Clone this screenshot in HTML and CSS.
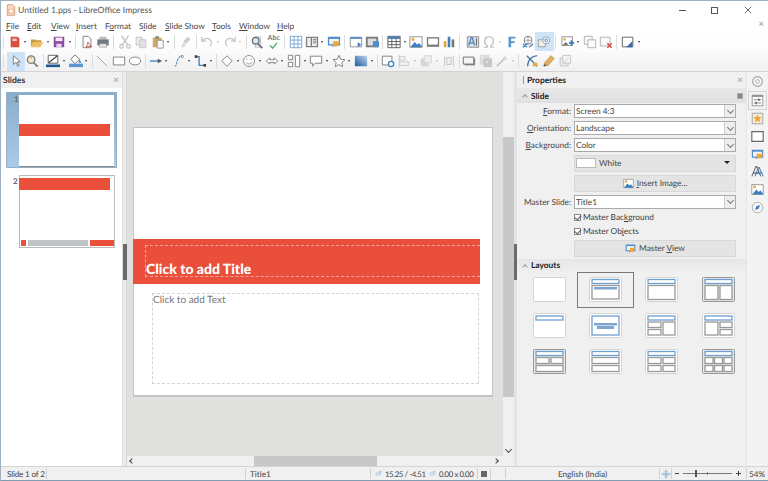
FILE: index.html
```html
<!DOCTYPE html>
<html lang="en">
<head>
<meta charset="utf-8">
<title>Untitled 1.pps - LibreOffice Impress</title>
<link rel="stylesheet" href="styles.css">
</head>
<body>
<svg class="defs" aria-hidden="true">
<symbol id="new" viewBox="0 0 16 16"><path d="M3 2h8l2 2v10H3z" fill="#d8503f"/><path d="M5 4h5v3H5z" fill="#f4c9c2"/></symbol>
<symbol id="open" viewBox="0 0 16 16"><path d="M1 5h5l1 1h6v2H4l-3 6z" fill="#c99a45"/><path d="M4 8h11l-3 6H1z" fill="#f0bd62"/></symbol>
<symbol id="save" viewBox="0 0 16 16"><path d="M2 2h12v12H2z" fill="#8d4aa5"/><path d="M4 3h8v4H4z" fill="#f3eaf6"/><path d="M5 10h6v4H5z" fill="#e7d7ec"/></symbol>
<symbol id="pdf" viewBox="0 0 16 16"><path d="M3.5 1.5h6l3 3v10h-9z" fill="#fff" stroke="#777"/><path d="M9 8c1 2 2 4 4 5-2 0-4 0-6 1 1-2 2-4 2-6z" fill="none" stroke="#d0443a"/></symbol>
<symbol id="print" viewBox="0 0 16 16"><path d="M4 2h8v3H4z" fill="#bbb"/><path d="M1.5 5h13v7h-13z" fill="#6f7b83"/><path d="M4 10h8v4H4z" fill="#e8e8e8" stroke="#888" stroke-width=".6"/></symbol>
<symbol id="cut" viewBox="0 0 16 16"><g fill="none" stroke="#bdbdbd" stroke-width="1.3"><path d="M4 1l7 10M12 1L5 11"/><circle cx="4" cy="13" r="2"/><circle cx="12" cy="13" r="2"/></g></symbol>
<symbol id="copy" viewBox="0 0 16 16"><path d="M2.5 2.5h7v9h-7z" fill="#eee" stroke="#c0c0c0"/><path d="M6.5 5.5h7v9h-7z" fill="#e2e2e2" stroke="#c0c0c0"/></symbol>
<symbol id="paste" viewBox="0 0 16 16"><path d="M2 3h10v11H2z" fill="#d0a868"/><path d="M5 1.500h4V4H5z" fill="#777"/><path d="M7 6h7v9H7z" fill="#fafafa" stroke="#777" stroke-width=".8"/></symbol>
<symbol id="clone" viewBox="0 0 16 16"><path d="M10 2l3 3-5 5-3-3z" fill="#ccc"/><path d="M5 8l3 3-2 3-4 0z" fill="#ddd"/></symbol>
<symbol id="undo" viewBox="0 0 16 16"><path d="M3 6c4-4 10-2 10 3 0 2-1 3-2 4M2 2v5h5" fill="none" stroke="#c4c4c4" stroke-width="1.3"/></symbol>
<symbol id="redo" viewBox="0 0 16 16"><path d="M13 6C9 2 3 4 3 9c0 2 1 3 2 4M14 2v5H9" fill="none" stroke="#c4c4c4" stroke-width="1.3"/></symbol>
<symbol id="find" viewBox="0 0 16 16"><path d="M6 2h6v12H6z" fill="#eee" stroke="#aaa" stroke-width=".7"/><circle cx="6.500" cy="6.500" r="3.800" fill="#d9e7f3" stroke="#5f6d78" stroke-width="1.400"/><path d="M9 10l5 5" stroke="#5f6d78" stroke-width="2"/></symbol>
<symbol id="grid" viewBox="0 0 16 16"><path d="M1.500 1.500h13v13h-13zM5.800 1.500v13M10.200 1.500v13M1.500 5.800h13M1.500 10.200h13" fill="#fff" stroke="#6f9fd0"/></symbol>
<symbol id="view" viewBox="0 0 16 16"><path d="M1 2h14v12H1z" fill="#7f7f7f"/><path d="M2.500 3.500h4v9h-4zM8 3.500h5.500v9H8z" fill="#efefef"/><path d="M9 5h4M9 7h4M9 9h4" stroke="#777"/></symbol>
<symbol id="master" viewBox="0 0 16 16"><path d="M1 2h14v10H8l-2 2v-2H1z" fill="#4f8cc9"/><path d="M2.500 4.500h11v6h-11z" fill="#f4f4f4"/><path d="M7 7h8l-3 6H7z" fill="#eea73c"/></symbol>
<symbol id="slide" viewBox="0 0 16 16"><path d="M1.500 2.500h13v11h-13z" fill="#fff" stroke="#888"/><path d="M1.500 2.500h13v2h-13z" fill="#4f8cc9"/><path d="M10 8l4 3-4 3z" fill="#3d7fc0"/></symbol>
<symbol id="slide2" viewBox="0 0 16 16"><path d="M1 2h14v12H1z" fill="#777"/><path d="M3 4h10v8H3z" fill="#ddd"/><path d="M9 7h7v7H9z" fill="#4f8cc9"/></symbol>
<symbol id="table" viewBox="0 0 16 16"><path d="M1 1.500h14v13H1z" fill="#fff" stroke="#555"/><path d="M1 1.500h14v3H1z" fill="#4f7fb0"/><path d="M1 7.500h14M1 11h14M5.500 4.500v10M10.500 4.500v10" stroke="#555"/></symbol>
<symbol id="image" viewBox="0 0 16 16"><path d="M1 2h14v12H1z" fill="#fff" stroke="#888"/><path d="M1.500 14l5-6 3 3 2-2 4 5z" fill="#3d7fc0"/><circle cx="4.500" cy="5" r="1.800" fill="#eeb03c"/></symbol>
<symbol id="video" viewBox="0 0 16 16"><path d="M1 2.500h14v11H1z" fill="#777"/><path d="M2.500 4h11v7h-11z" fill="#fff"/></symbol>
<symbol id="chart" viewBox="0 0 16 16"><path d="M2 7h3v7H2z" fill="#e3a63b"/><path d="M6.500 2h3v12h-3z" fill="#3d7fc0"/><path d="M11 5h3v9h-3z" fill="#777"/></symbol>
<symbol id="textbox" viewBox="0 0 16 16"><path d="M1.500 2h13v12h-13z" fill="#ddd" stroke="#888"/><path d="M3 12l3-9h1l3 9M4.300 9h4.500" fill="none" stroke="#3d7fc0" stroke-width="1.300"/><path d="M12 4v8" stroke="#555"/></symbol>
<symbol id="omega" viewBox="0 0 16 16"><path d="M2 14h4v-2c-2-1-3-3-3-5 0-3 2-5 5-5s5 2 5 5c0 2-1 4-3 5v2h4" fill="none" stroke="#bdbdbd" stroke-width="1.400"/></symbol>
<symbol id="fontwork" viewBox="0 0 16 16"><path d="M4 2h8v2H7v3h4v2H7v5H4z" fill="#5a96cf"/></symbol>
<symbol id="link" viewBox="0 0 16 16"><circle cx="8" cy="6" r="4.500" fill="none" stroke="#777"/><path d="M3.500 6h9M8 1.500v9" stroke="#777" stroke-width=".7"/><path d="M2 10l5 4M14 10l-5 4M2 14l5-4" stroke="#3d7fc0" stroke-width="1.300" fill="none"/></symbol>
<symbol id="inter" viewBox="0 0 16 16"><path d="M1.500 5.500h8v8h-8z" fill="#eee" stroke="#999"/><circle cx="10.500" cy="6" r="4" fill="#f4f8fc" stroke="#999"/><circle cx="10.500" cy="6" r="1.500" fill="#fff" stroke="#3d7fc0"/></symbol>
<symbol id="imgadd" viewBox="0 0 16 16"><path d="M1 2h12v10H1z" fill="#fff" stroke="#888"/><circle cx="4" cy="5" r="1.500" fill="#eeb03c"/><path d="M1.500 12l4-4 3 3z" fill="#777"/><path d="M9 9h6M12 6v6" stroke="#3d7fc0" stroke-width="2"/></symbol>
<symbol id="dup" viewBox="0 0 16 16"><path d="M1.500 1.500h9v9h-9z" fill="#fafafa" stroke="#aaa"/><path d="M5.500 5.500h9v9h-9z" fill="#fafafa" stroke="#aaa"/></symbol>
<symbol id="delslide" viewBox="0 0 16 16"><path d="M1.500 2.500h11v10h-11z" fill="#fafafa" stroke="#aaa"/><path d="M9.500 9.500l5 5M14.500 9.500l-5 5" stroke="#d9453b" stroke-width="1.500"/></symbol>
<symbol id="fill" viewBox="0 0 16 16"><path d="M1.500 2.500h12v11h-12z" fill="#fff" stroke="#555"/><path d="M13 7v7H6z" fill="#2f6cab"/></symbol>
<symbol id="select" viewBox="0 0 16 16"><path d="M5 2v10l3-2.500 2 4.500 1.500-.7-2-4.300h3.500z" fill="#fff" stroke="#666" stroke-width=".9"/></symbol>
<symbol id="zoomi" viewBox="0 0 16 16"><circle cx="7" cy="6.500" r="4.300" fill="#f7e7c9" stroke="#6f7b83" stroke-width="1.500"/><path d="M10 10l4.500 4.500" stroke="#6f7b83" stroke-width="2"/><path d="M5 4.500h3" stroke="#e0a030"/></symbol>
<symbol id="linec" viewBox="0 0 16 16"><path d="M2.500 1.500h11v9h-11z" fill="#fff" stroke="#555"/><path d="M3 10L13 2" stroke="#444" stroke-width="1.300"/><path d="M0 12h16v3H0z" fill="#23568f"/></symbol>
<symbol id="fillc" viewBox="0 0 16 16"><path d="M7 1l5 5-5 5-5-5z" fill="#fff" stroke="#666"/><path d="M12 6l2 4h-3z" fill="#3d7fc0"/><path d="M0 11h16v4H0z" fill="#5a96cf"/></symbol>
<symbol id="line" viewBox="0 0 16 16"><path d="M2 2l12 12" stroke="#8f8f8f" stroke-width=".9"/></symbol>
<symbol id="rect" viewBox="0 0 16 16"><path d="M1.500 3.500h13v9h-13z" fill="#fff" stroke="#777"/></symbol>
<symbol id="ell" viewBox="0 0 16 16"><ellipse cx="8" cy="8" rx="6.500" ry="4.500" fill="#fff" stroke="#777"/></symbol>
<symbol id="arrow" viewBox="0 0 16 16"><path d="M1 8h10" stroke="#3d7fc0" stroke-width="1.500"/><path d="M10 5.500l5 2.500-5 2.500z" fill="#555"/></symbol>
<symbol id="curve" viewBox="0 0 16 16"><path d="M4 14c3 0 2-5 4-8s2-4 5-4" fill="none" stroke="#4f8cc9" stroke-width="1.200" stroke-dasharray="3 .6"/><circle cx="13" cy="3" r="1.200" fill="#fff" stroke="#555" stroke-width=".7"/></symbol>
<symbol id="conn" viewBox="0 0 16 16"><path d="M3 3h4v10h6" fill="none" stroke="#3d7fc0" stroke-width="1.500"/><path d="M2 1.500h3v3H2zM12 11.500h3v3h-3z" fill="#444"/></symbol>
<symbol id="diam" viewBox="0 0 16 16"><path d="M8 2l6 6-6 6-6-6z" fill="#fff" stroke="#777"/></symbol>
<symbol id="smile" viewBox="0 0 16 16"><circle cx="8" cy="8" r="6.300" fill="#fff" stroke="#888"/><path d="M5 6h1M10 6h1" stroke="#666" stroke-width="1.300"/><path d="M4.500 9.500c1.500 2.500 5.500 2.500 7 0" fill="none" stroke="#888"/></symbol>
<symbol id="dbl" viewBox="0 0 16 16"><path d="M1.500 8l4-3.500v2h5v-2l4 3.500-4 3.500v-2h-5v2z" fill="#fff" stroke="#777"/></symbol>
<symbol id="flow" viewBox="0 0 16 16"><path d="M1.500 1.500h5v5h-5zM9.500 1.500h5v13h-5zM1.500 9.500h5v5h-5z" fill="#fff" stroke="#777"/></symbol>
<symbol id="call" viewBox="0 0 16 16"><path d="M1.500 2.500h13v8H7l-3 3.500v-3.500H1.500z" fill="#fff" stroke="#777"/></symbol>
<symbol id="star" viewBox="0 0 16 16"><path d="M8 1.500l2 4.500 4.800.500-3.600 3.200 1 4.800L8 12.100l-4.200 2.400 1-4.800L1.200 6.500 6 6z" fill="#fff" stroke="#777"/></symbol>
<symbol id="shad" viewBox="0 0 16 16"><defs><linearGradient id="g1" x1="0" y1="1" x2="1" y2="0"><stop offset="0" stop-color="#1e5c9e"/><stop offset="1" stop-color="#bcd3ea"/></linearGradient></defs><path d="M1 2h14v12H1z" fill="url(#g1)"/></symbol>
<symbol id="pts" viewBox="0 0 16 16"><path d="M1.500 2.500h11v10h-11z" fill="#fff" stroke="#777"/><circle cx="11.500" cy="11.500" r="3" fill="#fff" stroke="#3d7fc0" stroke-width="1.500"/></symbol>
<symbol id="align" viewBox="0 0 16 16"><path d="M2.500 1v14" stroke="#c8c8c8"/><path d="M3 3h6v4H3zM3 9h10v4H3z" fill="#f5f5f5" stroke="#c8c8c8"/></symbol>
<symbol id="arr" viewBox="0 0 16 16"><path d="M2 5h9v9H2z" fill="#d8d8d8"/><path d="M6 2h8v8H6z" fill="#ededed" stroke="#d0d0d0"/></symbol>
<symbol id="dist" viewBox="0 0 16 16"><path d="M3 2v12M13 2v12" stroke="#c0c0c0"/><path d="M5.500 4h5v8h-5z" fill="#eee" stroke="#c0c0c0"/></symbol>
<symbol id="shadow2" viewBox="0 0 16 16"><path d="M3 5h12v8H3z" fill="#888"/><path d="M1.500 3.500h12v8h-12z" fill="#f4f4f4" stroke="#666"/></symbol>
<symbol id="crop" viewBox="0 0 16 16"><path d="M1 1h11v11H1z" fill="#ddd"/><path d="M5 5h10v10H5z" fill="#c8c8c8"/><path d="M3 3h2v2H3zM8 8h2v2H8z" fill="#eee"/></symbol>
<symbol id="filter" viewBox="0 0 16 16"><path d="M2 14L11 5" stroke="#c4c4c4" stroke-width="2"/><path d="M11 2l3 3-2 2-3-3z" fill="#d8d8d8"/></symbol>
<symbol id="bez" viewBox="0 0 16 16"><path d="M2 2l12 12M14 2C8 2 3 7 3 14" fill="none" stroke="#3f6fa0" stroke-width="1.400"/><path d="M9 10h5v4H9z" fill="#e5a63a"/></symbol>
<symbol id="pencil" viewBox="0 0 16 16"><path d="M2 14l1-4 7-8 4 3-7 8z" fill="#e2b062" stroke="#a98040" stroke-width=".7"/><path d="M2 14l1-3 2 2z" fill="#555"/></symbol>
<symbol id="fx" viewBox="0 0 16 16"><path d="M2.500 4.500h9v9h-9z" fill="#eee" stroke="#c0c0c0"/><path d="M5.500 1.500h9v9h-9z" fill="#f4f4f4" stroke="#c0c0c0"/><path d="M5 12L12 4" stroke="#c8c8c8"/></symbol>
<symbol id="gear" viewBox="0 0 16 16"><circle cx="8" cy="8" r="6" fill="#f7f7f7" stroke="#a0a0a0" stroke-width="1.300"/><circle cx="8" cy="8" r="2.300" fill="none" stroke="#a0a0a0"/></symbol>
<symbol id="props" viewBox="0 0 16 16"><path d="M1.500 1.500h13v13h-13z" fill="#fff" stroke="#888"/><path d="M1.500 1.500h13v2h-13z" fill="#888"/><path d="M3.500 7h9M3.500 11h9" stroke="#777"/><path d="M9 5.500h1.500v3H9zM5.500 9.500H7v3H5.500z" fill="#555"/></symbol>
<symbol id="trans" viewBox="0 0 16 16"><path d="M1.500 1.500h13v13h-13z" fill="#f3ead8" stroke="#999"/><path d="M8 3l1.500 3.300 3.500.4-2.600 2.400.7 3.400L8 10.800l-3.100 1.700.7-3.400L3 6.700l3.500-.4z" fill="#eba636"/></symbol>
<symbol id="blank" viewBox="0 0 16 16"><path d="M1 2h14v12H1z" fill="#fff" stroke="#666" stroke-width="1.400"/></symbol>
<symbol id="navi" viewBox="0 0 16 16"><circle cx="8" cy="8" r="6.500" fill="#f9f9f9" stroke="#999"/><path d="M5 11l1.500-4.500L11 5 9.500 9.500z" fill="#3d7fc0"/></symbol>
<symbol id="styles" viewBox="0 0 16 16"><path d="M1 14L6 2h1l5 12M3 10h7" fill="none" stroke="#666" stroke-width="1.300"/><path d="M5 14L9 3h1l5 11M7 10h7" fill="none" stroke="#3d7fc0" stroke-width="1.300"/></symbol>
<symbol id="doc" viewBox="0 0 16 16"><path d="M3 1h7l3 3v11H3z" fill="#f7dccb" stroke="#d9835a"/><path d="M5 7h6v5H5z" fill="#fff" stroke="#d9835a" stroke-width=".7"/></symbol>
<symbol id="target" viewBox="0 0 16 16"><path d="M8 1l2 3H9v3h3V6l3 2-3 2V9H9v3h1l-2 3-2-3h1V9H4v1L1 8l3-2v1h3V4H6z" fill="#a9c4e0" stroke="#7ea4c9" stroke-width=".5"/></symbol>
<symbol id="sel" viewBox="0 0 16 16"><path d="M2.500 6.500h8v5h-8z" fill="#fff" stroke="#5a96cf"/><path d="M9 3.500h5v4H9z" fill="#fff" stroke="#5a96cf"/></symbol>
</svg>

<div class="window">
  <header class="titlebar">
    <svg class="icon icon-doc"><use href="#doc"/></svg>
    <span class="title">Untitled 1.pps - LibreOffice Impress</span>
    <div class="caption">
      <span class="cap-min"></span>
      <span class="cap-max"></span>
      <svg class="cap-close" viewBox="0 0 10 10"><path d="M1 1l8 8M9 1l-8 8" stroke="#444" stroke-width="1" fill="none"/></svg>
    </div>
  </header>

  <nav class="menubar">
    <span class="m m-file"><u>F</u>ile</span>
    <span class="m m-edit"><u>E</u>dit</span>
    <span class="m m-view"><u>V</u>iew</span>
    <span class="m m-insert"><u>I</u>nsert</span>
    <span class="m m-format">F<u>o</u>rmat</span>
    <span class="m m-slide">S<u>l</u>ide</span>
    <span class="m m-show"><u>S</u>lide Show</span>
    <span class="m m-tools"><u>T</u>ools</span>
    <span class="m m-window"><u>W</u>indow</span>
    <span class="m"><u>H</u>elp</span>
    <span class="docclose">×</span>
  </nav>

  <div class="toolbars">
    <div class="tb">
      <i class="s"></i>
      <b class="t"><svg class="icon"><use href="#new"/></svg></b><i class="a"></i>
      <b class="t"><svg class="icon"><use href="#open"/></svg></b><i class="a"></i>
      <b class="t"><svg class="icon"><use href="#save"/></svg></b><i class="a"></i>
      <i class="s"></i>
      <b class="t"><svg class="icon"><use href="#pdf"/></svg></b>
      <b class="t"><svg class="icon"><use href="#print"/></svg></b>
      <i class="s"></i>
      <b class="t"><svg class="icon"><use href="#cut"/></svg></b>
      <b class="t"><svg class="icon"><use href="#copy"/></svg></b>
      <b class="t"><svg class="icon"><use href="#paste"/></svg></b><i class="a"></i>
      <i class="s"></i>
      <b class="t"><svg class="icon"><use href="#clone"/></svg></b>
      <i class="s"></i>
      <b class="t"><svg class="icon"><use href="#undo"/></svg></b><i class="a dim"></i>
      <b class="t"><svg class="icon"><use href="#redo"/></svg></b><i class="a dim"></i>
      <i class="s"></i>
      <b class="t"><svg class="icon"><use href="#find"/></svg></b>
      <b class="t spell"><span class="abc">Abc</span><svg class="check" viewBox="0 0 10 8"><path d="M1 4l3 3 5-6" fill="none" stroke="#4aa564" stroke-width="1.500"/></svg></b>
      <i class="s"></i>
      <b class="t"><svg class="icon"><use href="#grid"/></svg></b>
      <b class="t"><svg class="icon"><use href="#view"/></svg></b><i class="a"></i>
      <b class="t"><svg class="icon"><use href="#master"/></svg></b>
      <i class="s"></i>
      <b class="t"><svg class="icon"><use href="#slide"/></svg></b>
      <b class="t"><svg class="icon"><use href="#slide2"/></svg></b>
      <i class="s"></i>
      <b class="t"><svg class="icon"><use href="#table"/></svg></b><i class="a"></i>
      <b class="t"><svg class="icon"><use href="#image"/></svg></b>
      <b class="t"><svg class="icon"><use href="#video"/></svg></b>
      <b class="t"><svg class="icon"><use href="#chart"/></svg></b>
      <i class="s s-w3"></i>
      <b class="t"><svg class="icon"><use href="#textbox"/></svg></b>
      <b class="t"><svg class="icon"><use href="#omega"/></svg></b><i class="a dim"></i>
      <b class="t"><svg class="icon"><use href="#fontwork"/></svg></b>
      <b class="t"><svg class="icon"><use href="#link"/></svg></b>
      <b class="t on"><svg class="icon"><use href="#inter"/></svg></b>
      <i class="s s-w1"></i>
      <b class="t"><svg class="icon"><use href="#imgadd"/></svg></b><i class="a"></i>
      <b class="t"><svg class="icon"><use href="#dup"/></svg></b>
      <b class="t"><svg class="icon"><use href="#delslide"/></svg></b>
      <i class="s"></i>
      <b class="t"><svg class="icon"><use href="#fill"/></svg></b><i class="a"></i>
    </div>
    <div class="tb tb2">
      <i class="s s-wide"></i>
      <b class="t on"><svg class="icon"><use href="#select"/></svg></b>
      <b class="t"><svg class="icon"><use href="#zoomi"/></svg></b>
      <i class="s"></i>
      <b class="t"><svg class="icon"><use href="#linec"/></svg></b><i class="a"></i>
      <b class="t"><svg class="icon"><use href="#fillc"/></svg></b><i class="a"></i>
      <i class="s"></i>
      <b class="t"><svg class="icon"><use href="#line"/></svg></b>
      <b class="t"><svg class="icon"><use href="#rect"/></svg></b>
      <b class="t"><svg class="icon"><use href="#ell"/></svg></b>
      <i class="s"></i>
      <b class="t"><svg class="icon"><use href="#arrow"/></svg></b><i class="a"></i>
      <b class="t"><svg class="icon"><use href="#curve"/></svg></b><i class="a"></i>
      <b class="t"><svg class="icon"><use href="#conn"/></svg></b><i class="a"></i>
      <i class="s"></i>
      <b class="t"><svg class="icon"><use href="#diam"/></svg></b><i class="a"></i>
      <b class="t"><svg class="icon"><use href="#smile"/></svg></b><i class="a"></i>
      <b class="t"><svg class="icon"><use href="#dbl"/></svg></b><i class="a"></i>
      <b class="t"><svg class="icon"><use href="#flow"/></svg></b><i class="a"></i>
      <b class="t"><svg class="icon"><use href="#call"/></svg></b><i class="a"></i>
      <b class="t"><svg class="icon"><use href="#star"/></svg></b><i class="a"></i>
      <b class="t"><svg class="icon"><use href="#shad"/></svg></b><i class="a"></i>
      <i class="s"></i>
      <b class="t"><svg class="icon"><use href="#pts"/></svg></b>
      <b class="t"><svg class="icon"><use href="#align"/></svg></b><i class="a dim"></i>
      <b class="t"><svg class="icon"><use href="#arr"/></svg></b><i class="a dim"></i>
      <b class="t"><svg class="icon"><use href="#dist"/></svg></b>
      <i class="s"></i>
      <b class="t"><svg class="icon"><use href="#shadow2"/></svg></b>
      <b class="t"><svg class="icon"><use href="#crop"/></svg></b>
      <b class="t"><svg class="icon"><use href="#filter"/></svg></b><i class="a dim"></i>
      <i class="s s-w3"></i>
      <b class="t"><svg class="icon"><use href="#bez"/></svg></b>
      <b class="t"><svg class="icon"><use href="#pencil"/></svg></b>
      <b class="t"><svg class="icon"><use href="#fx"/></svg></b>
    </div>
  </div>

  <main class="main">
    <aside class="slides">
      <div class="pane-head"><span class="slides-title">Slides</span><span class="x">×</span></div>
      <div class="slide-list">
        <div class="item item-on">
          <span class="num">1</span>
          <div class="thumb thumb-1"><div class="band"></div></div>
        </div>
        <div class="item item-2">
          <span class="num">2</span>
          <div class="thumb thumb-2">
            <div class="band"></div>
            <div class="foot"><i class="f1"></i><i class="f2"></i><i class="f3"></i></div>
          </div>
        </div>
      </div>
    </aside>

    <div class="split"><span class="handle"></span></div>

    <section class="center">
      <div class="center-top">
        <div class="work">
          <div class="slide">
            <div class="title-band"><div class="ph-title">Click to add Title</div></div>
            <div class="ph-text">Click to add Text</div>
          </div>
        </div>
        <div class="vscroll"><span class="vthumb"></span><span class="chev-d"></span></div>
      </div>
      <div class="hscroll"><span class="chev-l"></span><span class="hthumb"></span><span class="chev-r"></span></div>
    </section>

    <div class="split split-r"><span class="handle"></span></div>

    <aside class="panel">
      <div class="pane-head props-head"><span class="bar"></span><strong>Properties</strong><span class="x">×</span></div>
      <div class="sec-head"><span class="caret"></span><strong>Slide</strong><span class="more"></span></div>
      <div class="form">
        <label class="lab"><u>F</u>ormat:</label>
        <div class="field"><span>Screen 4:3</span><i class="drop"></i></div>
        <label class="lab"><u>O</u>rientation:</label>
        <div class="field"><span>Landscape</span><i class="drop"></i></div>
        <label class="lab"><u>B</u>ackground:</label>
        <div class="field"><span>Color</span><i class="drop"></i></div>
        <div class="btn btn-color"><i class="swatch"></i><span>White</span><i class="tri"></i></div>
        <div class="btn btn-mid btn-img"><svg class="icon-sm"><use href="#image"/></svg><span><u>I</u>nsert Image...</span></div>
        <label class="lab">Master Slide:</label>
        <div class="field"><span>Title1</span><i class="drop"></i></div>
        <div class="chk"><i class="box"></i><span>Master Bac<u>k</u>ground</span></div>
        <div class="chk"><i class="box"></i><span>Master Ob<u>j</u>ects</span></div>
        <div class="btn btn-mid btn-view"><svg class="icon-sm"><use href="#master"/></svg><span>Master <u>V</u>iew</span></div>
      </div>
      <div class="sec-head sec-layouts"><span class="caret"></span><strong>Layouts</strong></div>
      <div class="layouts">
        <div class="lay"><svg class="lay-i" viewBox="0 0 33 25"><rect x=".5" y=".5" width="32" height="24" rx="1" class="lb"/></svg></div>
        <div class="lay lay-on"><svg class="lay-i" viewBox="0 0 33 25"><rect x=".5" y=".5" width="32" height="24" rx="1" class="lb"/><rect x="3" y="2.500" width="27" height="4" class="lt"/><rect x="3" y="8.500" width="27" height="13.500" class="lg"/><path d="M5 10h23v2.500H5z" class="ls"/></svg></div>
        <div class="lay"><svg class="lay-i" viewBox="0 0 33 25"><rect x=".5" y=".5" width="32" height="24" rx="1" class="lb"/><rect x="3" y="2.500" width="27" height="4" class="lt"/><rect x="3" y="8.500" width="27" height="14" class="lg"/></svg></div>
        <div class="lay"><svg class="lay-i" viewBox="0 0 33 25"><rect x=".5" y=".5" width="32" height="24" rx="1" class="lb2"/><rect x="3" y="2.500" width="27" height="4" class="lt"/><rect x="3" y="8.500" width="13" height="14" class="lg"/><rect x="18" y="8.500" width="12" height="14" class="lg"/></svg></div>

        <div class="lay"><svg class="lay-i" viewBox="0 0 33 25"><rect x=".5" y=".5" width="32" height="24" rx="1" class="lb"/><rect x="3" y="3" width="27" height="4" class="lt"/></svg></div>
        <div class="lay"><svg class="lay-i" viewBox="0 0 33 25"><rect x=".5" y=".5" width="32" height="24" rx="1" class="lb"/><rect x="3" y="3" width="27" height="19" class="lt"/><path d="M5 10h23v2.500H5z" class="ls"/><path d="M8 13h17v3H8z" class="ls"/></svg></div>
        <div class="lay"><svg class="lay-i" viewBox="0 0 33 25"><rect x=".5" y=".5" width="32" height="24" rx="1" class="lb"/><rect x="3" y="3" width="27" height="4" class="lt"/><rect x="3" y="9" width="13" height="5.500" class="lg"/><rect x="3" y="16.500" width="13" height="5.500" class="lg"/><rect x="18" y="9" width="12" height="13" class="lg"/></svg></div>
        <div class="lay"><svg class="lay-i" viewBox="0 0 33 25"><rect x=".5" y=".5" width="32" height="24" rx="1" class="lb"/><rect x="3" y="3" width="27" height="4" class="lt"/><rect x="3" y="9" width="13" height="13" class="lg"/><rect x="18" y="9" width="12" height="5.500" class="lg"/><rect x="18" y="16.500" width="12" height="5.500" class="lg"/></svg></div>

        <div class="lay"><svg class="lay-i" viewBox="0 0 33 25"><rect x=".5" y=".5" width="32" height="24" rx="1" class="lb2"/><rect x="3" y="2.500" width="27" height="4" class="lt"/><rect x="3" y="8.500" width="13" height="6" class="lg"/><rect x="18" y="8.500" width="12" height="6" class="lg"/><rect x="3" y="16.500" width="27" height="6" class="lg"/></svg></div>
        <div class="lay"><svg class="lay-i" viewBox="0 0 33 25"><rect x=".5" y=".5" width="32" height="24" rx="1" class="lb"/><rect x="3" y="2.500" width="27" height="4" class="lt"/><rect x="3" y="8.500" width="27" height="6" class="lg"/><rect x="3" y="16.500" width="27" height="6" class="lg"/></svg></div>
        <div class="lay"><svg class="lay-i" viewBox="0 0 33 25"><rect x=".5" y=".5" width="32" height="24" rx="1" class="lb"/><rect x="3" y="2.500" width="27" height="4" class="lt"/><rect x="3" y="8.500" width="13" height="6" class="lg"/><rect x="18" y="8.500" width="12" height="6" class="lg"/><rect x="3" y="16.500" width="13" height="6" class="lg"/><rect x="18" y="16.500" width="12" height="6" class="lg"/></svg></div>
        <div class="lay"><svg class="lay-i" viewBox="0 0 33 25"><rect x=".5" y=".5" width="32" height="24" rx="1" class="lb2"/><rect x="3" y="2.500" width="27" height="4" class="lt"/><rect x="3" y="8.500" width="8" height="6" class="lg"/><rect x="12.500" y="8.500" width="8" height="6" class="lg"/><rect x="22" y="8.500" width="8" height="6" class="lg"/><rect x="3" y="16.500" width="8" height="6" class="lg"/><rect x="12.500" y="16.500" width="8" height="6" class="lg"/><rect x="22" y="16.500" width="8" height="6" class="lg"/></svg></div>
      </div>
    </aside>

    <aside class="tabs">
      <svg class="tab"><use href="#gear"/></svg>
      <svg class="tab tab-on"><use href="#props"/></svg>
      <svg class="tab"><use href="#trans"/></svg>
      <svg class="tab"><use href="#blank"/></svg>
      <svg class="tab"><use href="#master"/></svg>
      <svg class="tab"><use href="#styles"/></svg>
      <svg class="tab"><use href="#image"/></svg>
      <svg class="tab"><use href="#navi"/></svg>
    </aside>
  </main>

  <footer class="status">
    <span class="cell c1">Slide 1 of 2</span>
    <span class="cell c2"></span>
    <span class="cell c3">Title1</span>
    <span class="cell c4"><svg class="st"><use href="#sel"/></svg><span class="pos">15.25 / -4.51</span><svg class="st"><use href="#sel"/></svg><span>0.00 x 0.00</span></span>
    <span class="cell c5"><i class="disk"></i></span>
    <span class="cell c6"></span>
    <span class="cell c7">English (India)</span>
    <span class="cell c8"><svg class="st st-t"><use href="#target"/></svg></span>
    <span class="cell c9"><i class="minus"></i><span class="track"><i class="tick"></i><i class="knob"></i></span><i class="plus"></i></span>
    <span class="cell c10">54%</span>
  </footer>
</div>
</body>
</html>
```
FILE: styles.css
```css
* { box-sizing: border-box; }
html, body { margin: 0; padding: 0; }
body { width: 768px; height: 481px; overflow: hidden; font-family: "Lato", "Open Sans", sans-serif; font-size: 8.300px; color: #3c3c3c; text-rendering: geometricPrecision; }
.defs { width: 0; height: 0; position: absolute; }
u { text-decoration-thickness: 1px; text-underline-offset: 1px; }
i, b { display: block; font-style: normal; }

.window { width: 768px; height: 481px; display: flex; flex-direction: column; background: #fff; border: 1px solid #9fb0c0; border-bottom-color: #7f9cb0; border-right: 0; overflow: hidden; }

.titlebar { height: 18px; flex: none; display: flex; align-items: center; padding-left: 4px; gap: 1px; background: #fff; }
.title { font-size: 8.600px; color: #555; }
.icon { width: 14px; height: 14px; display: block; }
.icon-doc { width: 12px; height: 12px; }
.caption { margin-left: auto; display: flex; align-items: center; }
.cap-min { width: 7px; height: 1px; background: #555; margin-right: 25px; }
.cap-max { width: 7px; height: 7px; border: 1px solid #555; margin-right: 26px; }
.cap-close { width: 8px; height: 8px; margin-right: 16px; }

.menubar { height: 13px; flex: none; display: flex; align-items: center; padding-left: 5px; background: #fff; position: relative; font-size: 8.300px; color: #444; }
.m { display: block; }
.m-file { width: 21px; } .m-edit { width: 24px; } .m-view { width: 25px; } .m-insert { width: 29px; }
.m-format { width: 34px; } .m-slide { width: 26px; } .m-show { width: 47px; } .m-tools { width: 27px; } .m-window { width: 38px; }
.docclose { position: absolute; right: 4px; top: -1px; color: #999; font-size: 10px; }

.toolbars { flex: none; background: linear-gradient(#fff, #fdfdfd 40%, #f0f0f0); border-bottom: 1px solid #d4d4d4; }
.tb { height: 19.500px; display: flex; align-items: center; }
.t { width: 16.300px; height: 17px; flex: none; display: flex; align-items: center; justify-content: center; position: relative; }
.t.on { background: #cde4f8; box-shadow: 0 0 0 1px #cde4f8; }
.a { width: 6px; height: 6px; flex: none; position: relative; }
.a::after { content: ""; position: absolute; left: 1.500px; top: 2px; border: 1.500px solid transparent; border-top: 2px solid #333; }
.a.dim::after { border-top-color: #bbb; }
.s { width: 5.500px; height: 14px; flex: none; position: relative; }
.s::after { content: ""; position: absolute; left: 2px; top: 0; bottom: 0; width: 1px; background: #dcdcdc; }
.tb2 .s { width: 4.500px; }
.tb .s-w3, .tb2 .s-w3 { width: 8px; }
.s-w1 { width: 7px; }
.tb2 .s-wide { width: 7px; }
.spell { flex-direction: column; }
.abc { font-size: 7px; color: #777; line-height: 7px; }
.check { width: 9px; height: 7px; }

.main { flex: 1; min-height: 0; display: flex; background: #f0f0f0; }

.slides { width: 121px; flex: none; display: flex; flex-direction: column; background: #fff; }
.pane-head { height: 16px; flex: none; display: flex; align-items: center; background: #f0f0f0; padding-left: 2px; padding-right: 3px; color: #222; }
.slides-title { font-size: 8.600px; font-weight: 700; color: #333; }
.x { margin-left: auto; color: #999; font-size: 10px; line-height: 10px; }
.slide-list { flex: 1; padding: 4px 0 0 5px; display: flex; flex-direction: column; gap: 7px; }
.item { width: 111px; display: flex; padding-left: 8px; padding-top: 3px; padding-bottom: 2px; height: 76px; }
.item-2 { height: 74px; padding-top: 0; padding-left: 7px; }
.item-on { background: linear-gradient(#8aadca, #aacbe8); border: 1px solid #93b0c8; padding-left: 7px; padding-top: 2px; }
.num { width: 6px; font-size: 8px; font-weight: 700; color: #666; line-height: 8px; }
.item-2 .num { margin-top: 2px; }
.item-on .num { width: 5px; }
.thumb { background: #fff; display: flex; flex-direction: column; }
.thumb-1 { width: 95px; height: 71px; padding-top: 29px; box-shadow: 0 1px 0 #888; }
.thumb-2 { width: 96px; height: 73px; padding: 2px 0 0; border: 1px solid #bbb; }
.band { width: 91px; height: 12px; background: #ea4f3c; }
.foot { margin-top: auto; margin-bottom: 1px; height: 6px; display: flex; gap: 2px; padding-left: 2px; }
.f1 { width: 5px; background: #ea4f3c; }
.f2 { width: 60px; background: #c0c4c6; }
.f3 { width: 24px; background: #ea4f3c; }

.split { width: 5px; flex: none; background: #ececec; border-left: 1px solid #ddd; border-right: 1px solid #d8d8d8; display: flex; align-items: center; justify-content: flex-start; padding-bottom: 14px; }
.split-r { width: 3px; border: 0; background: #e4e4e4; }
.handle { width: 4px; height: 36px; background: #6a6a6a; flex: none; }

.center { width: 387px; flex: none; display: flex; flex-direction: column; }
.center-top { flex: 1; min-height: 0; display: flex; }
.work { flex: 1; background: #e0e0df; padding: 55px 0 0 6px; }
.slide { width: 360px; height: 270px; background: #fff; border: 1px solid #c4c4c4; border-width: 1px 1px 2px 1px; display: flex; flex-direction: column; padding-top: 111px; }
.title-band { width: 347px; height: 45px; margin-left: -1px; background: #ea4f3c; padding: 6px 0 7px 12px; flex: none; }
.ph-title { height: 32px; border: 1px dashed #f4a59b; border-right: 0; display: flex; align-items: flex-end; font-family: "Lato", "Open Sans", sans-serif; font-weight: 900; font-size: 14px; line-height: 15px; color: #fff; }
.ph-text { margin: 9px 13px 0 18px; height: 91px; border: 1px dashed #d4d4d4; font-family: "Lato", "Open Sans", sans-serif; font-size: 10px; line-height: 13px; color: #777; flex: none; }

.vscroll { width: 11px; flex: none; background: #f0f0f0; display: flex; flex-direction: column; align-items: stretch; padding-top: 65px; position: relative; }
.vthumb { height: 260px; background: #c8c8c8; display: block; }
.chev-d { margin: auto auto 4px; width: 5px; height: 5px; border: solid #555; border-width: 0 1px 1px 0; transform: rotate(45deg); }

.hscroll { height: 10px; flex: none; display: flex; align-items: center; background: #f0f0f0; padding-left: 3px; padding-right: 6px; }
.chev-l { width: 4px; height: 4px; border: solid #444; border-width: 1px 0 0 1px; transform: rotate(-45deg); }
.hthumb { width: 123px; height: 10px; background: #c8c8c8; margin-left: 120px; }
.chev-r { width: 4px; height: 4px; border: solid #444; border-width: 1px 1px 0 0; transform: rotate(45deg); margin-left: auto; margin-right: 10px; }

.panel { width: 229px; flex: none; display: flex; flex-direction: column; background: #f0f0f0; }
.props-head { padding-left: 6px; gap: 3px; }
.bar { width: 1px; height: 8px; background: #999; }
.props-head strong { font-weight: 700; font-size: 8.400px; }
.sec-head { height: 15px; flex: none; display: flex; align-items: center; background: linear-gradient(#e8e8e8, #e0e0e0); padding-left: 6px; padding-right: 3px; color: #222; }
.sec-head strong { font-weight: 700; font-size: 8.400px; margin-left: 4px; }
.caret { width: 4px; height: 4px; border: solid #999; border-width: 1px 0 0 1px; transform: rotate(45deg); margin-top: 3px; }
.more { width: 6px; height: 6px; background: #888; border: 1px solid #aaa; margin-left: auto; }
.sec-layouts { margin-top: 2px; height: 13px; background: linear-gradient(#e6e6e6, #efefef); }

.form { display: grid; grid-template-columns: 54px 162px; gap: 3px; padding-top: 1px; align-items: center; flex: none; }
.lab { text-align: right; white-space: nowrap; color: #444; }
.field { grid-column: 2; height: 14px; display: flex; align-items: center; justify-content: space-between; background: #fff; border: 1px solid #aaa; padding-left: 1px; color: #444; }
.drop { width: 11px; height: 12px; background: #eee; border-left: 1px solid #ccc; position: relative; }
.drop::after { content: ""; position: absolute; left: 3px; top: 2.500px; width: 4px; height: 4px; border: solid #777; border-width: 0 1px 1px 0; transform: rotate(45deg); }
.btn { grid-column: 2; background: #e4e4e4; border: 1px solid #d8d8d8; display: flex; align-items: center; gap: 3px; color: #444; }
.btn-color { height: 16.500px; padding-left: 1px; gap: 3px; }
.swatch { width: 20px; height: 10px; background: #fff; border: 1px solid #bbb; }
.tri { margin-left: auto; margin-right: 5px; margin-top: 2px; border: 3px solid transparent; border-top: 3px solid #222; }
.btn-mid { height: 17px; justify-content: center; }
.icon-sm { width: 11px; height: 11px; }
.chk { grid-column: 2; height: 11px; display: flex; align-items: center; gap: 2px; }
.box { width: 7px; height: 7px; background: #fff; border: 1px solid #888; position: relative; }
.box::after { content: ""; position: absolute; left: 1px; top: -1px; width: 3px; height: 5px; border: solid #555; border-width: 0 1px 1px 0; transform: rotate(40deg); }

.layouts { flex: 1; display: grid; grid-template-columns: repeat(4, 56.300px); grid-auto-rows: 36px; align-content: start; padding-left: 4px; }
.lay { display: flex; align-items: center; justify-content: center; }
.lay-on { border: 1px solid #777; }
.lay-i { width: 33px; height: 25px; display: block; }
.lb { fill: #fff; stroke: #d4d4d4; }
.lb2 { fill: #e8e8e8; stroke: #999; }
.lt { fill: #fff; stroke: #6f9fd0; stroke-width: 1.300; }
.lg { fill: #fff; stroke: #999; stroke-width: 1.300; }
.ls { fill: #7fa5cf; }

.tabs { flex: 1; display: flex; flex-direction: column; align-items: center; padding-top: 3px; background: #f3f3f3; border-left: 1px solid #e6e6e6; }
.tab { width: 13px; height: 13px; display: block; margin-bottom: 4.800px; flex: none; }
.tab-on { margin-top: 1.500px; outline: 1px solid #d4d4d4; outline-offset: 2px; }

.status { height: 14px; flex: none; display: flex; align-items: center; background: #f0f0f0; border-top: 1px solid #d4d4d4; font-size: 8.200px; color: #444; }
.cell { height: 11px; display: flex; align-items: center; white-space: nowrap; flex: none; border-left: 1px solid #d0d0d0; }
.c1 { width: 45px; padding-left: 6px; border-left: 0; letter-spacing: -.2px; }
.c2 { width: 199px; }
.c3 { width: 125px; padding-left: 4px; }
.c4 { width: 107px; padding-left: 4px; gap: 3px; font-size: 7.800px; letter-spacing: -.4px; }
.pos { width: 41px; flex: none; }
.c5 { width: 13px; justify-content: center; }
.c6 { width: 15px; }
.c7 { width: 154px; justify-content: center; }
.c8 { width: 12px; justify-content: center; }
.c9 { width: 75px; padding-left: 3px; gap: 4px; }
.c10 { flex: 1; padding-left: 2px; }
.st { width: 7px; height: 7px; flex: none; }
.st-t { width: 10px; height: 10px; }
.disk { width: 6px; height: 6px; background: #666; }
.minus { width: 4px; height: 1px; background: #444; }
.plus { width: 5px; height: 5px; background: linear-gradient(#444, #444) center / 5px 1px no-repeat, linear-gradient(#444, #444) center / 1px 5px no-repeat; }
.track { width: 49px; height: 1px; background: #777; position: relative; display: block; }
.knob { position: absolute; left: 12px; top: -3px; width: 2px; height: 7px; background: #555; }
.tick { position: absolute; left: 24px; top: -1px; width: 1px; height: 3px; background: #777; }
.thumb-2 .band { margin-left: -1px; }
.thumb-2 .foot { margin-left: -1px; }
```
